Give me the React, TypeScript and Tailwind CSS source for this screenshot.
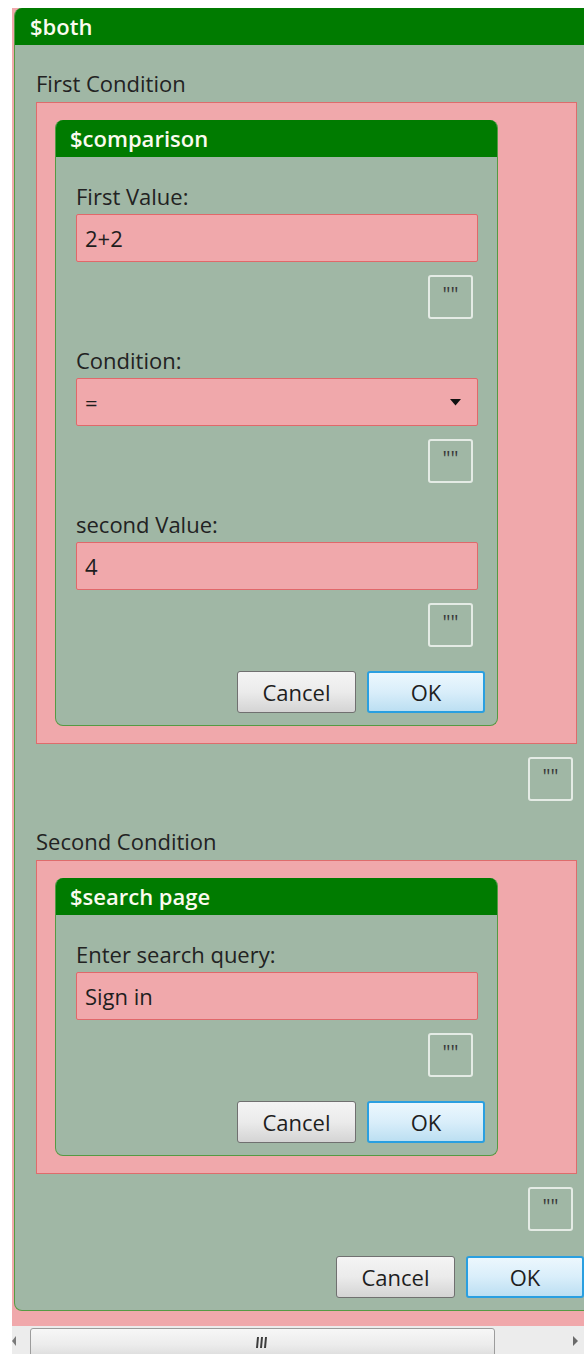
import type { ReactNode } from "react";

const font = { fontFamily: '"Open Sans", "Noto Sans", sans-serif' };

function QuoteButton({ inset = "mr-[5px]" }: { inset?: string }) {
  return (
    <div className={`flex justify-end ${inset}`}>
      <button className="flex h-[44px] w-[45px] items-center justify-center rounded-[3px] border-2 border-[#e4ebe5] pb-[6px] text-[20px] leading-none text-[#3a3a3a]">
        &quot;&quot;
      </button>
    </div>
  );
}

function DialogButtons() {
  return (
    <div className="mr-[-7px] flex justify-end gap-[11px]">
      <button className="h-[42px] w-[119px] rounded-[3px] border border-[#707070] bg-gradient-to-b from-[#f4f4f4] via-[#ebebeb] to-[#d4d4d4] text-[22px] leading-none text-[#1e1e1e]">
        Cancel
      </button>
      <button className="h-[42px] w-[118px] rounded-[3px] border-2 border-[#2a9fe0] bg-gradient-to-b from-[#ecf7fd] via-[#d9eefa] to-[#bcdff2] text-[22px] leading-none text-[#1e1e1e]">
        OK
      </button>
    </div>
  );
}

function Field({ label, children }: { label: string; children: ReactNode }) {
  return (
    <div>
      <div className="text-[22px] leading-[22px] text-[#222]">{label}</div>
      <div className="mt-[7px] flex h-[48px] items-center rounded-[2px] border border-[#e0686a] bg-[#f0a8ab] px-[8px] text-[22px] text-[#1e1e1e]">
        {children}
      </div>
      <div className="mt-[13px]">
        <QuoteButton />
      </div>
    </div>
  );
}

function Card({ title, children }: { title: string; children: ReactNode }) {
  return (
    <div className="w-[443px] overflow-hidden rounded-[8px] border border-t-0 border-[#559a44] bg-[#a0b7a5]">
      <div className="flex h-[37px] items-center bg-[#007b00] px-[14px] text-[22px] font-semibold text-[#fbfbef]">
        {title}
      </div>
      <div className="pb-[12px] pl-[20px] pr-[19px] pt-[28px]">
        <div className="flex flex-col gap-[30px]">{children}</div>
        <div className="mt-[24px]">
          <DialogButtons />
        </div>
      </div>
    </div>
  );
}

function Slot({ children }: { children: ReactNode }) {
  return (
    <div className="mt-[8px] border border-[#de6c6c] bg-[#f0a8ab] pb-[17px] pl-[18px] pt-[17px]">
      {children}
    </div>
  );
}

function ScrollBar() {
  return (
    <div className="relative h-[30px] w-full bg-[#ececec]">
      <svg className="absolute left-0 top-[9px]" width="6" height="12" viewBox="0 0 6 12">
        <path d="M4 1 L0 6 L4 11 Z" fill="#7a7a7a" />
      </svg>
      <div className="absolute left-[18px] top-[2px] flex h-[34px] w-[465px] items-center justify-center rounded-[3px] border border-[#9c9c9c] bg-gradient-to-b from-[#f7f7f7] via-[#ececec] to-[#d6d6d6]">
        <svg className="mb-[6px]" width="14" height="13" viewBox="0 0 14 13">
          <path d="M2 1 L1 12 M6 1 L5 12 M10 1 L9 12" stroke="#3c3c3c" strokeWidth="2" />
        </svg>
      </div>
      <svg className="absolute left-[560px] top-[9px]" width="8" height="12" viewBox="0 0 8 12">
        <path d="M1 1 L6 6 L1 11 Z" fill="#6a6a6a" />
      </svg>
    </div>
  );
}

export default function App() {
  return (
    <div className="h-[1354px] w-[584px] overflow-hidden bg-white pl-[12px] pt-[8px]" style={font}>
      <div className="w-[590px] bg-[#f0a8ab] pb-[15px] pl-[2px]">
        <div className="w-[584px] overflow-hidden rounded-[8px] border border-t-0 border-[#559a44] bg-[#a0b7a5]">
          <div className="flex h-[37px] items-center bg-[#007b00] px-[15px] text-[22px] font-semibold text-[#fbfbef]">
            $both
          </div>
          <div className="w-[582px] pb-[12px] pl-[21px] pr-[20px] pt-[27px]">
            <div className="text-[22px] leading-[22px] text-[#222]">First Condition</div>
            <Slot>
              <Card title="$comparison">
                <Field label="First Value:">2+2</Field>
                <Field label="Condition:">
                  <span className="flex-1">=</span>
                  <svg className="mr-[8px]" width="11" height="7" viewBox="0 0 11 7">
                    <path d="M0 0 L11 0 L5.5 6.5 Z" fill="#111" />
                  </svg>
                </Field>
                <Field label="second Value:">4</Field>
              </Card>
            </Slot>
            <div className="mt-[13px]">
              <QuoteButton inset="mr-[4px]" />
            </div>

            <div className="mt-[29px] text-[22px] leading-[22px] text-[#222]">Second Condition</div>
            <Slot>
              <Card title="$search page">
                <Field label="Enter search query:">Sign in</Field>
              </Card>
            </Slot>
            <div className="mt-[13px]">
              <QuoteButton inset="mr-[4px]" />
            </div>
            <div className="mt-[25px]">
              <DialogButtons />
            </div>
          </div>
        </div>
      </div>
      <ScrollBar />
    </div>
  );
}
